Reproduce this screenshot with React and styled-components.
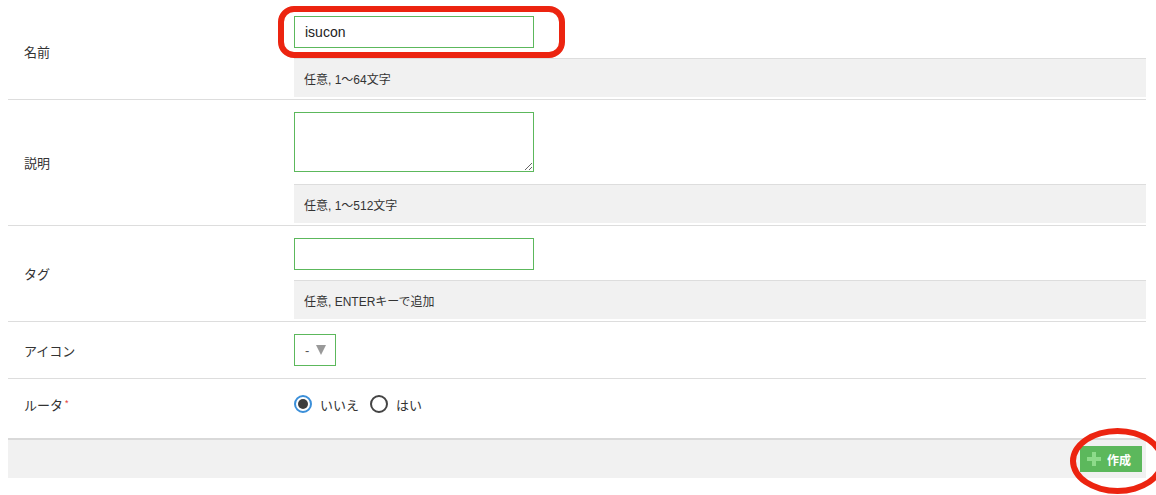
import React from 'react';
import styled, { createGlobalStyle } from "styled-components";

const GlobalStyle = createGlobalStyle`
    body {
        margin: 0;
        background: #ffffff;
        font-family: "Liberation Sans", "Noto Sans CJK JP", sans-serif;
        color: #333333;
    }
`;

const StyledPage = styled.div`
    position: relative;
    width: 1138px;
    margin-left: 8px;
    padding: 4px 0 17px;
`;

const StyledRow = styled.div`
    display: grid;
    grid-template-columns: 286px 1fr;
    border-bottom: ${props => props.$last ? "none" : "1px solid #dddddd"};
`;

const StyledLabel = styled.div`
    align-self: ${props => props.$top ? "start" : "center"};
    padding: ${props => props.$top ? "16px 0 0 16px" : "0 0 0 16px"};
    font-size: 13px;
    color: #333333;
`;

const StyledRequired = styled.span`
    color: #e53935;
    font-size: 9px;
    vertical-align: 4px;
    margin-left: 2px;
`;

const StyledField = styled.div`
    display: flex;
    flex-direction: column;
    align-items: flex-start;
    padding: ${props => props.$pad || "12px 0 2px"};
`;

const StyledInput = styled.input`
    box-sizing: border-box;
    width: 240px;
    height: 32px;
    border: 1px solid #5cb85c;
    padding: 0 10px;
    font-family: "Liberation Sans", sans-serif;
    font-size: 14px;
    color: #222222;
    outline: none;
`;

const StyledTextarea = styled.textarea`
    box-sizing: border-box;
    display: block;
    width: 240px;
    height: 60px;
    margin-bottom: 2px;
    border: 1px solid #5cb85c;
    outline: none;
`;

const StyledHelp = styled.div`
    box-sizing: border-box;
    align-self: stretch;
    height: 39px;
    margin-top: 10px;
    padding-left: 10px;
    display: flex;
    align-items: center;
    background: #f1f1f1;
    border-top: 1px solid #dddddd;
    font-size: 12px;
    color: #333333;
`;

const StyledSelect = styled.div`
    box-sizing: border-box;
    width: 42px;
    height: 32px;
    border: 1px solid #5cb85c;
    display: flex;
    align-items: center;
    gap: 7px;
    padding-left: 10px;
    font-size: 13px;
    color: #555555;
`;

const StyledCaret = styled.span`
    width: 0;
    height: 0;
    border-left: 5px solid transparent;
    border-right: 5px solid transparent;
    border-top: 10px solid #999999;
`;

const StyledRadioGroup = styled.div`
    display: flex;
    align-items: center;
    height: 22px;
`;

const StyledRadio = styled.span`
    box-sizing: border-box;
    width: 18px;
    height: 18px;
    border-radius: 50%;
    border: 2px solid ${props => props.$checked ? "#3b8fd9" : "#444444"};
    display: flex;
    align-items: center;
    justify-content: center;
    &::after {
        content: "";
        display: ${props => props.$checked ? "block" : "none"};
        width: 10px;
        height: 10px;
        border-radius: 50%;
        background: #3d3d3d;
    }
`;

const StyledRadioText = styled.span`
    font-size: 13px;
    color: #333333;
    margin: 0 ${props => props.$gap || "11px"} 0 8px;
`;

const StyledFooter = styled.div`
    box-sizing: border-box;
    height: 40px;
    border-top: 2px solid #d9d9d9;
    background: #f1f1f1;
    display: flex;
    justify-content: flex-end;
    align-items: center;
    padding-right: 4px;
`;

const StyledButton = styled.button`
    display: flex;
    align-items: center;
    gap: 6px;
    width: 62px;
    height: 26px;
    padding: 0 0 0 7px;
    border: 0;
    background: #5cb85c;
    color: #ffffff;
    font-family: "Noto Sans CJK JP", sans-serif;
    font-weight: bold;
    font-size: 12px;
    cursor: pointer;
`;

const StyledMarkBox = styled.div`
    position: absolute;
    left: 270px;
    top: 6px;
    width: 287px;
    height: 52px;
    box-sizing: border-box;
    border: 6px solid #ec2410;
    border-radius: 16px;
    pointer-events: none;
`;

const StyledMarkOval = styled.div`
    position: absolute;
    left: 1062px;
    top: 428px;
    width: 95px;
    height: 66px;
    box-sizing: border-box;
    border: 6px solid #ec2410;
    border-radius: 50%;
    pointer-events: none;
`;

const PlusIcon = () => (
    <svg width="14" height="14" viewBox="0 0 14 14">
        <rect x="5" y="0" width="4" height="14" fill="#8ddb8a" />
        <rect x="0" y="5" width="14" height="4" fill="#8ddb8a" />
    </svg>
);

const App = () => {
    return (
        <>
            <GlobalStyle />
            <StyledPage>
                <StyledRow>
                    <StyledLabel>名前</StyledLabel>
                    <StyledField>
                        <StyledInput defaultValue="isucon" />
                        <StyledHelp>任意, 1〜64文字</StyledHelp>
                    </StyledField>
                </StyledRow>
                <StyledRow>
                    <StyledLabel>説明</StyledLabel>
                    <StyledField>
                        <StyledTextarea />
                        <StyledHelp>任意, 1〜512文字</StyledHelp>
                    </StyledField>
                </StyledRow>
                <StyledRow>
                    <StyledLabel>タグ</StyledLabel>
                    <StyledField>
                        <StyledInput />
                        <StyledHelp>任意, ENTERキーで追加</StyledHelp>
                    </StyledField>
                </StyledRow>
                <StyledRow>
                    <StyledLabel>アイコン</StyledLabel>
                    <StyledField $pad="12px 0 12px">
                        <StyledSelect>-<StyledCaret /></StyledSelect>
                    </StyledField>
                </StyledRow>
                <StyledRow $last>
                    <StyledLabel $top>ルータ<StyledRequired>*</StyledRequired></StyledLabel>
                    <StyledField $pad="14px 0 23px">
                        <StyledRadioGroup>
                            <StyledRadio $checked />
                            <StyledRadioText>いいえ</StyledRadioText>
                            <StyledRadio />
                            <StyledRadioText $gap="0">はい</StyledRadioText>
                        </StyledRadioGroup>
                    </StyledField>
                </StyledRow>
                <StyledFooter>
                    <StyledButton><PlusIcon />作成</StyledButton>
                </StyledFooter>
                <StyledMarkBox />
                <StyledMarkOval />
            </StyledPage>
        </>
    );
};

export default App;
